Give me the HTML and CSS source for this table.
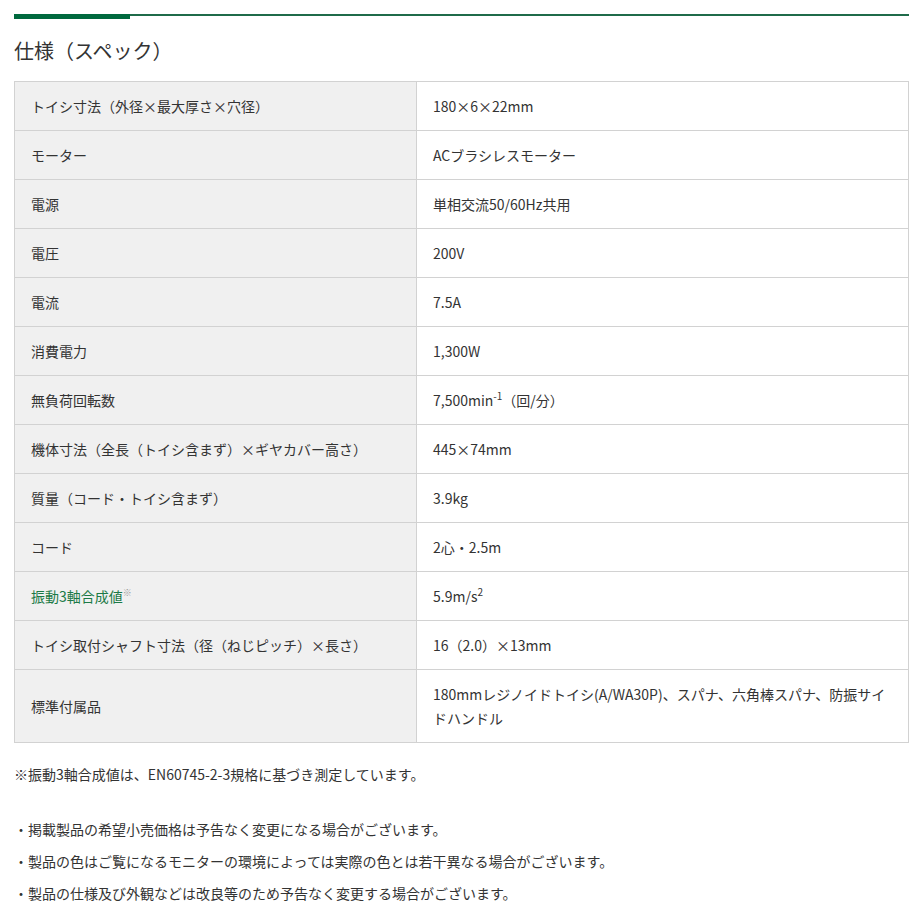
FILE: index.html
```html
<!DOCTYPE html>
<html lang="ja">
<head>
    <meta charset="UTF-8">
    <meta name="viewport" content="width=device-width, initial-scale=1.0">
    <title>仕様（スペック）</title>
    <link rel="stylesheet" href="styles.css">
</head>
<body>
    <div class="container">
        <div class="section-line"><span class="section-line-accent"></span></div>

        <h2 class="spec-title">仕様（スペック）</h2>

        <table class="spec-table">
            <tbody>
                <tr>
                    <th>トイシ寸法（外径×最大厚さ×穴径）</th>
                    <td>180×6×22mm</td>
                </tr>
                <tr>
                    <th>モーター</th>
                    <td>ACブラシレスモーター</td>
                </tr>
                <tr>
                    <th>電源</th>
                    <td>単相交流50/60Hz共用</td>
                </tr>
                <tr>
                    <th>電圧</th>
                    <td>200V</td>
                </tr>
                <tr>
                    <th>電流</th>
                    <td>7.5A</td>
                </tr>
                <tr>
                    <th>消費電力</th>
                    <td>1,300W</td>
                </tr>
                <tr>
                    <th>無負荷回転数</th>
                    <td>7,500min<sup>-1</sup>（回/分）</td>
                </tr>
                <tr>
                    <th>機体寸法（全長（トイシ含まず）×ギヤカバー高さ）</th>
                    <td>445×74mm</td>
                </tr>
                <tr>
                    <th>質量（コード・トイシ含まず）</th>
                    <td>3.9kg</td>
                </tr>
                <tr>
                    <th>コード</th>
                    <td>2心・2.5m</td>
                </tr>
                <tr>
                    <th><span class="note-link">振動3軸合成値</span><sup class="note-mark">※</sup></th>
                    <td>5.9m/s<sup>2</sup></td>
                </tr>
                <tr>
                    <th>トイシ取付シャフト寸法（径（ねじピッチ）×長さ）</th>
                    <td>16（2.0）×13mm</td>
                </tr>
                <tr>
                    <th>標準付属品</th>
                    <td>180mmレジノイドトイシ(A/WA30P)、スパナ、六角棒スパナ、防振サイドハンドル</td>
                </tr>
            </tbody>
        </table>

        <p class="footnote">※振動3軸合成値は、EN60745-2-3規格に基づき測定しています。</p>

        <ul class="notice-list">
            <li>・掲載製品の希望小売価格は予告なく変更になる場合がございます。</li>
            <li>・製品の色はご覧になるモニターの環境によっては実際の色とは若干異なる場合がございます。</li>
            <li>・製品の仕様及び外観などは改良等のため予告なく変更する場合がございます。</li>
        </ul>
    </div>
</body>
</html>
```

FILE: styles.css
```css
body {
    font-family: "Noto Sans CJK JP", "Noto Sans", sans-serif;
    color: #333;
    background: #fff;
    margin: 0;
    padding: 0;
}

.container {
    padding: 14px 15px 0 14px;
}

.section-line {
    height: 2px;
    background: #1f6b4a;
    position: relative;
}

.section-line-accent {
    position: absolute;
    left: 0;
    top: 0;
    width: 116px;
    height: 5px;
    background: #00693e;
}

.spec-title {
    font-size: 20px;
    font-weight: 400;
    line-height: 30px;
    margin: 20px 0 15px;
    color: #333;
}

.spec-table {
    width: 100%;
    border-collapse: collapse;
    font-size: 14px;
    line-height: 24px;
}

.spec-table th,
.spec-table td {
    border: 1px solid #d2d2d2;
    padding: 12px 16px 12px 16px;
    text-align: left;
    vertical-align: middle;
    font-weight: 400;
}

.spec-table th {
    width: 369px;
    background: #f0f0f0;
}

.spec-table td {
    background: #fff;
}

.spec-table sup {
    font-size: 10px;
    line-height: 0;
    vertical-align: 6px;
}

.note-link {
    color: #1c7a47;
}

.spec-table .note-mark {
    color: #999;
    font-size: 9px;
}

.footnote {
    font-size: 14px;
    line-height: 22px;
    margin: 20px 0 33px;
}

.notice-list {
    list-style: none;
    margin: 0;
    padding: 0;
    font-size: 14px;
    line-height: 22px;
}

.notice-list li {
    margin-bottom: 10px;
}
```
